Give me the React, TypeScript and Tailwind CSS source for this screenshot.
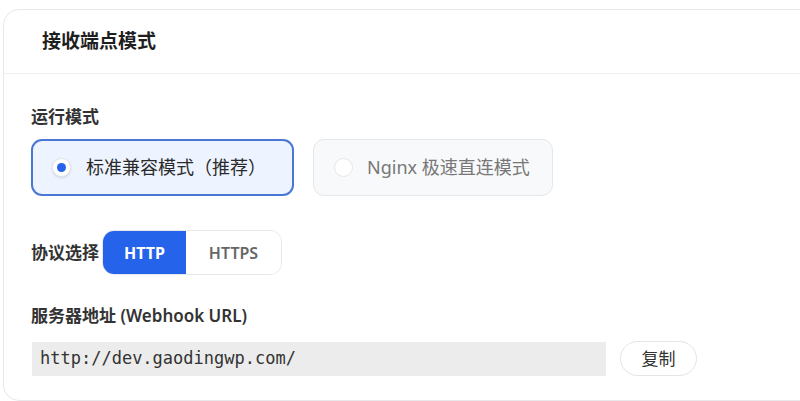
import React, { useState } from 'react';

const sans = { fontFamily: '"Noto Sans", "Noto Sans CJK SC", sans-serif' };
const mono = { fontFamily: '"DejaVu Sans Mono", "Liberation Mono", monospace' };

export default function App() {
  const [mode, setMode] = useState<'std' | 'nginx'>('std');
  const [proto, setProto] = useState<'http' | 'https'>('http');

  return (
    <div className="h-[401px] overflow-hidden bg-white pt-[9px] pl-[3px]" style={sans}>
      <div className="w-[830px] h-[392px] rounded-[16px] border border-[#e8e8ea] bg-white">
        {/* Header */}
        <div className="h-[64px] flex items-center pl-[38px] border-b border-[#efeff1]">
          <h2 className="text-[19px] font-bold text-[#1f1f1f] leading-none">接收端点模式</h2>
        </div>

        {/* Body */}
        <div className="pl-[27px] pt-[31px]">
          <div className="text-[17px] leading-[24px] font-semibold text-[#333]">运行模式</div>

          <div className="mt-[10px] flex gap-[19px]">
            <button
              onClick={() => setMode('std')}
              className={
                mode === 'std'
                  ? 'w-[263px] h-[57px] flex items-center pl-[19px] rounded-[11px] border-2 border-[#4a76d4] bg-[#eef4ff]'
                  : 'w-[263px] h-[57px] flex items-center pl-[19px] rounded-[11px] border border-[#e5e7eb] bg-[#f8f9fa]'
              }
            >
              <span className="w-[19px] h-[19px] rounded-full bg-white border border-[#e3e6ea] shadow-sm flex items-center justify-center">
                {mode === 'std' && <span className="w-[9px] h-[9px] rounded-full bg-[#2563eb]" />}
              </span>
              <span className={mode === 'std' ? 'ml-[15px] text-[18px] text-[#2a2a2a]' : 'ml-[15px] text-[18px] text-[#777]'}>
                标准兼容模式（推荐）
              </span>
            </button>

            <button
              onClick={() => setMode('nginx')}
              className={
                mode === 'nginx'
                  ? 'w-[240px] h-[57px] flex items-center pl-[19px] rounded-[11px] border-2 border-[#4a76d4] bg-[#eef4ff]'
                  : 'w-[240px] h-[57px] flex items-center pl-[20px] rounded-[11px] border border-[#e5e7eb] bg-[#f8f9fa]'
              }
            >
              <span className="w-[19px] h-[19px] rounded-full bg-white border border-[#e3e6ea] flex items-center justify-center">
                {mode === 'nginx' && <span className="w-[9px] h-[9px] rounded-full bg-[#2563eb]" />}
              </span>
              <span className={mode === 'nginx' ? 'ml-[14px] text-[18px] text-[#2a2a2a]' : 'ml-[14px] text-[18px] text-[#777]'}>
                Nginx 极速直连模式
              </span>
            </button>
          </div>

          <div className="mt-[34px] flex items-center">
            <span className="text-[17px] leading-[24px] font-semibold text-[#333] w-[71px]">协议选择</span>
            <div className="flex h-[45px] rounded-[12px] border border-[#e5e7eb] overflow-hidden">
              <button
                onClick={() => setProto('http')}
                className={
                  proto === 'http'
                    ? 'w-[83px] text-[16px] font-bold bg-[#2563eb] text-white'
                    : 'w-[83px] text-[16px] font-semibold bg-white text-[#666]'
                }
              >
                HTTP
              </button>
              <button
                onClick={() => setProto('https')}
                className={
                  proto === 'https'
                    ? 'w-[95px] text-[16px] font-bold bg-[#2563eb] text-white'
                    : 'w-[95px] text-[16px] font-semibold bg-white text-[#666]'
                }
              >
                HTTPS
              </button>
            </div>
          </div>

          <div className="mt-[29px] text-[17px] leading-[24px] font-semibold text-[#333]">
            服务器地址 (Webhook URL)
          </div>

          <div className="mt-[13px] flex items-center">
            <div className="ml-[1px] w-[574px] h-[34px] bg-[#ececec] flex items-center pl-[8px]">
              <span className="text-[17px] text-[#333]" style={mono}>
                {proto === 'http' ? 'http' : 'https'}://dev.gaodingwp.com/
              </span>
            </div>
            <button className="ml-[14px] w-[77px] h-[35px] rounded-full border border-[#e3e5e8] bg-white text-[17px] text-[#333]">
              复制
            </button>
          </div>
        </div>
      </div>
    </div>
  );
}
